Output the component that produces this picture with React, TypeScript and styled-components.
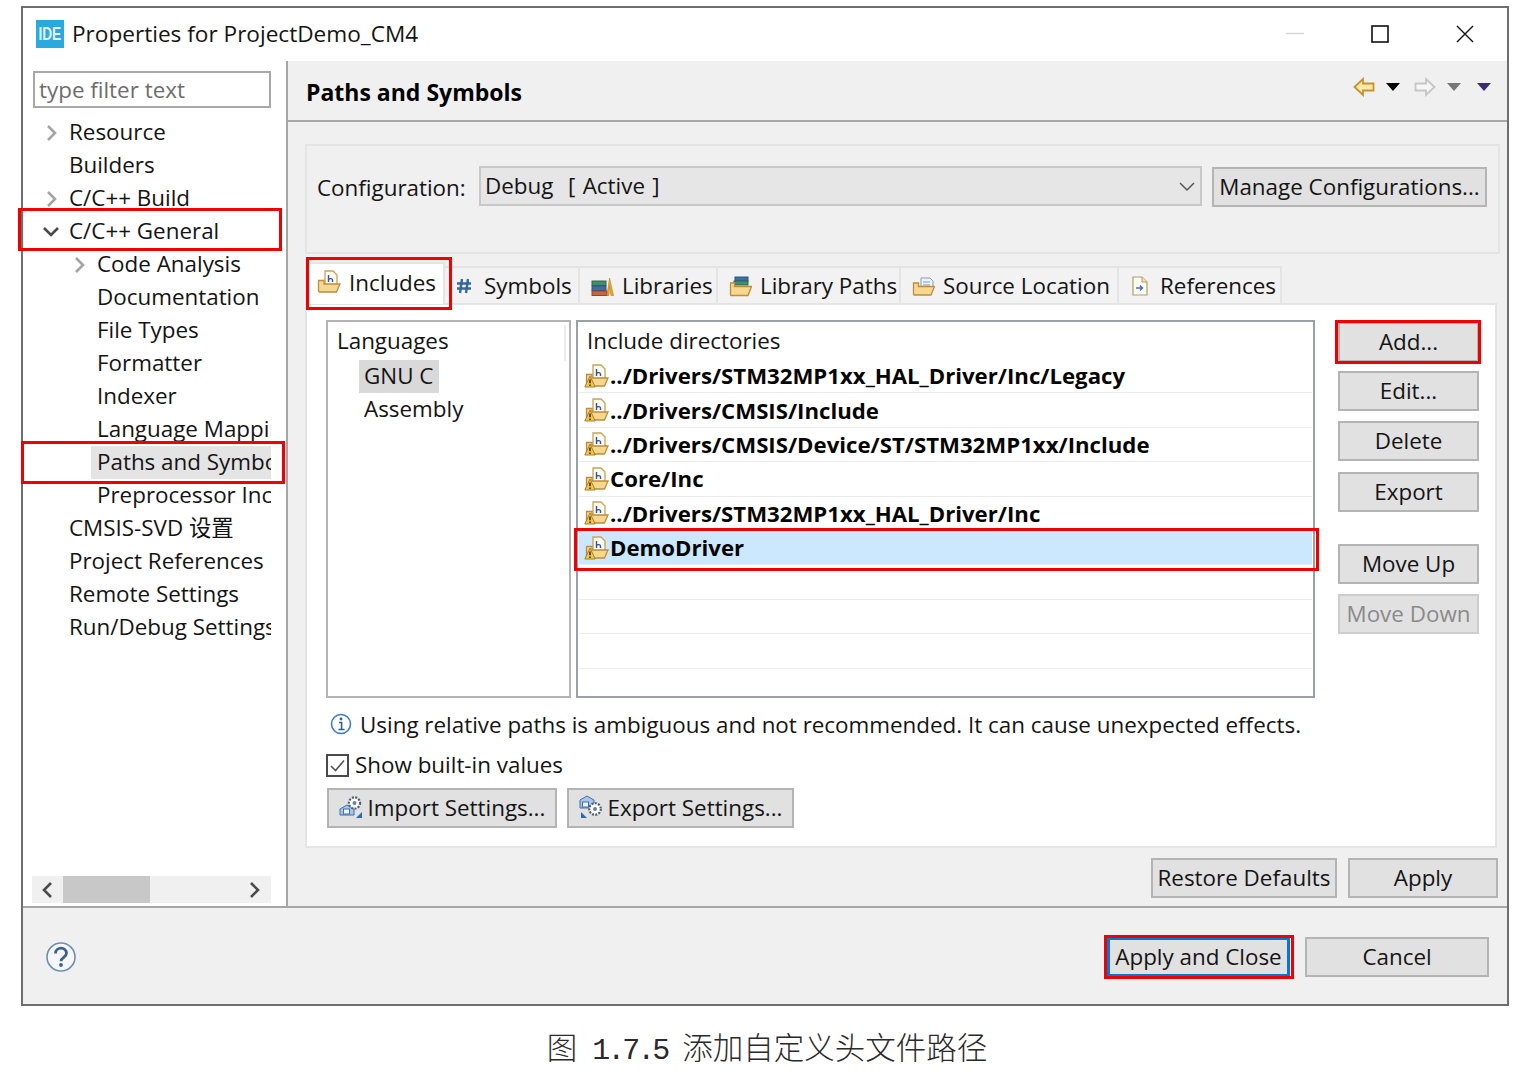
import React, { FC } from 'react';
import styled, { createGlobalStyle } from 'styled-components';

const FONT = '"Open Sans", "Noto Sans", "Noto Sans CJK SC", sans-serif';

const GlobalStyle = createGlobalStyle`
  html, body { margin: 0; padding: 0; background: #fff; }
  * { box-sizing: border-box; }
  body { font-family: ${FONT}; font-size: 22.4px; color: #141414; }
`;

const Page = styled.div`
  width: 1514px;
  height: 1088px;
  padding: 6px 0 0 21px;
  overflow: hidden;
`;
const Window = styled.div`
  width: 1488px;
  height: 1000px;
  border: 2px solid #6e6e6e;
  display: flex;
  flex-direction: column;
  background: #fff;
`;
const TitleBar = styled.div`
  height: 53px;
  display: flex;
  align-items: center;
  padding: 0 33px 2px 13px;
  gap: 8px;
  flex: none;
`;
const AppLogo = styled.div`
  width: 28px;
  height: 28px;
  background: #29a9e0;
  color: #e2f4fc;
  font: bold 19px/28px "Liberation Sans", sans-serif;
  text-align: center;
  overflow: hidden;
`;
const AppLogoText = styled.span`
  display: inline-block;
  transform: scaleX(0.72);
  transform-origin: center;
  margin-left: -6px;
  margin-right: -6px;
`;
const WindowTitle = styled.div`
  flex: 1;
  font-size: 22.6px;
  line-height: 30px;
`;
const WindowButtons = styled.div`
  display: flex;
  align-items: center;
  gap: 67px;
`;
const Body = styled.div`
  flex: 1;
  display: flex;
  min-height: 0;
`;
const Sidebar = styled.div`
  width: 265px;
  flex: none;
  border-right: 2px solid #a6a6a6;
  padding: 10px 0 3px 10px;
  display: flex;
  flex-direction: column;
`;
const FilterInput = styled.div`
  width: 238px;
  height: 37px;
  border: 2px solid #a8a8a8;
  padding-left: 4px;
  color: #6d6d6d;
  line-height: 33px;
  flex: none;
`;
const Tree = styled.div`
  width: 238px;
  margin-top: 8px;
`;
const TreeRow = styled.div<{ $level: number }>`
  position: relative;
  height: 33px;
  display: flex;
  align-items: center;
  padding-left: ${(p) => 13 + p.$level * 28}px;
  white-space: nowrap;
`;
const Twisty = styled.span`
  width: 23px;
  flex: none;
  display: flex;
  align-items: center;
`;
const TreeLabel = styled.span<{ $selected?: boolean }>`
  overflow: hidden;
  height: 33px;
  line-height: 32px;
  flex: 1;
  min-width: 0;
  background: ${(p) => (p.$selected ? '#e4e4e4' : 'transparent')};
  margin-left: ${(p) => (p.$selected ? '-6px' : '0')};
  padding-left: ${(p) => (p.$selected ? '6px' : '0')};
`;
const Highlight = styled.div<{ $top: number; $left: number; $w: number; $h: number }>`
  position: absolute;
  top: ${(p) => p.$top}px;
  left: ${(p) => p.$left}px;
  width: ${(p) => p.$w}px;
  height: ${(p) => p.$h}px;
  border: 3px solid #f00000;
  pointer-events: none;
  z-index: 5;
`;
const HScroll = styled.div`
  margin-top: auto;
  margin-left: -1px;
  width: 239px;
  height: 27px;
  background: #f0f0f0;
  display: flex;
  align-items: center;
  flex: none;
`;
const ScrollArrow = styled.span`
  width: 31px;
  display: flex;
  justify-content: center;
  flex: none;
`;
const ScrollThumb = styled.div`
  width: 87px;
  height: 27px;
  background: #c8c8c8;
  margin-right: auto;
`;
const Main = styled.div`
  flex: 1;
  display: flex;
  flex-direction: column;
  background: #f0f0f0;
  min-width: 0;
`;
const Header = styled.div`
  height: 61px;
  flex: none;
  border-bottom: 2px solid #a6a6a6;
  display: flex;
  align-items: center;
  padding: 2px 16px 0 18px;
`;
const HeaderTitle = styled.div`
  flex: 1;
  font-weight: 700;
  font-size: 23px;
  color: #000;
`;
const HeaderTools = styled.div`
  display: flex;
  align-items: center;
  margin-top: -10px;
`;
const Content = styled.div`
  flex: 1;
  padding: 22px 9px 0 17px;
  display: flex;
  flex-direction: column;
`;
const ConfigPanel = styled.div`
  width: 1195px;
  height: 110px;
  border: 2px solid #e4e4e4;
  padding: 20px 12px 0 10px;
  display: flex;
  align-items: flex-start;
  flex: none;
`;
const ConfigLabel = styled.div`
  width: 162px;
  height: 40px;
  line-height: 44px;
  flex: none;
`;
const Select = styled.div`
  width: 723px;
  height: 40px;
  background: #e6e6e6;
  border: 2px solid #c8c8c8;
  padding: 0 4px 1px;
  display: flex;
  align-items: center;
  justify-content: space-between;
  line-height: 34px;
  word-spacing: 1.5px;
  flex: none;
`;
const Button = styled.div<{ $w: number; $disabled?: boolean; $focus?: boolean; $mt?: number; $ml?: number }>`
  position: relative;
  width: ${(p) => p.$w}px;
  height: 40px;
  flex: none;
  background: #e1e1e1;
  border-style: solid;
  border-width: ${(p) => (p.$focus ? '3px' : '2px')};
  border-color: ${(p) => (p.$focus ? '#0078d7' : p.$disabled ? '#cdcdcd' : '#b4b4b4')};
  color: ${(p) => (p.$disabled ? '#8a8a8a' : '#141414')};
  display: flex;
  align-items: center;
  justify-content: center;
  gap: 5px;
  padding-bottom: 2px;
  margin-top: ${(p) => p.$mt ?? 0}px;
  margin-left: ${(p) => p.$ml ?? 0}px;
  white-space: nowrap;
`;
const TabBar = styled.div`
  display: flex;
  align-items: flex-end;
  height: 45px;
  margin-top: 4px;
  flex: none;
`;
const Tab = styled.div<{ $active?: boolean; $w: number; $pl?: number }>`
  position: relative;
  width: ${(p) => p.$w}px;
  height: ${(p) => (p.$active ? '42px' : '37px')};
  padding: ${(p) => (p.$active ? '0 0 4px 9px' : `0 0 0 ${p.$pl ?? 11}px`)};
  background: ${(p) => (p.$active ? '#fff' : '#f2f2f2')};
  border: 2px solid #e4e4e4;
  border-bottom: none;
  border-left-width: ${(p) => (p.$active ? '2px' : '0')};
  display: flex;
  align-items: center;
  gap: 8px;
  white-space: nowrap;
  flex: none;
  z-index: ${(p) => (p.$active ? 2 : 1)};
  margin-bottom: ${(p) => (p.$active ? '-1px' : '0')};
`;
const TabPanel = styled.div`
  width: 1192px;
  height: 545px;
  background: #fff;
  border: 2px solid #e4e4e4;
  padding: 15px 0 0 19px;
  display: flex;
  flex-direction: column;
  flex: none;
`;
const PanelTop = styled.div`
  display: flex;
  height: 378px;
  flex: none;
`;
const LangBox = styled.div`
  width: 245px;
  border: 2px solid #b4b4b4;
  padding-left: 9px;
  flex: none;
`;
const LangHeader = styled.div`
  height: 38px;
  line-height: 38px;
  position: relative;

  &::after {
    content: '';
    position: absolute;
    top: 3px;
    right: 3px;
    width: 2px;
    height: 36px;
    background: #ececec;
  }
`;
const LangItem = styled.div<{ $selected?: boolean }>`
  margin-left: 22px;
  width: 80px;
  height: 33px;
  line-height: 31px;
  padding-left: 5px;
  white-space: nowrap;
  background: ${(p) => (p.$selected ? '#d9d9d9' : 'transparent')};
`;
const IncludeBox = styled.div`
  width: 739px;
  margin-left: 5px;
  border: 2px solid #9a9fa8;
  padding: 0 1px;
  flex: none;
`;
const IncludeHeader = styled.div`
  height: 37px;
  line-height: 38px;
  padding-left: 8px;
`;
const IncludeRow = styled.div<{ $selected?: boolean }>`
  position: relative;
  height: 34.4px;
  display: flex;
  align-items: center;
  padding-left: 5px;
  gap: 1px;
  border-bottom: 1px solid #ececec;
  font-weight: 700;
  font-size: 22.2px;
  color: #050505;
  background: ${(p) => (p.$selected ? '#cce8ff' : 'transparent')};
  white-space: nowrap;
`;
const SideButtons = styled.div`
  margin-left: 23px;
  padding-top: 2px;
  display: flex;
  flex-direction: column;
  gap: 10px;
`;
const InfoRow = styled.div`
  height: 30px;
  margin-top: 12px;
  padding: 0 0 2px 4px;
  display: flex;
  align-items: center;
  gap: 8px;
  white-space: nowrap;
  flex: none;
`;
const CheckRow = styled.div`
  height: 30px;
  margin-top: 10px;
  display: flex;
  align-items: center;
  gap: 6px;
  flex: none;
`;
const CheckLabel = styled.span`
  margin-top: -2px;
`;
const CheckBox = styled.div`
  width: 23px;
  height: 23px;
  border: 2px solid #4a4a4a;
  display: flex;
  align-items: center;
  justify-content: center;
`;
const SettingsRow = styled.div`
  display: flex;
  gap: 10px;
  margin: 8px 0 0 1px;
  flex: none;
`;
const ApplyRow = styled.div`
  display: flex;
  justify-content: flex-end;
  gap: 11px;
  margin-top: 10px;
  flex: none;
`;
const Footer = styled.div`
  height: 98px;
  flex: none;
  border-top: 2px solid #a6a6a6;
  background: #f0f0f0;
  display: flex;
  align-items: center;
  padding: 2px 18px 0 23px;
  gap: 15px;
`;
const FooterSpacer = styled.div`
  flex: 1;
`;
const Caption = styled.div`
  width: 1488px;
  padding: 22px 0 0 4px;
  text-align: center;
  font-family: "Noto Sans CJK SC", sans-serif;
  font-weight: 300;
  font-size: 30.5px;
  line-height: 36px;
  color: #2a2a2a;
  white-space: pre;
`;
const CaptionNumber = styled.span`
  font-family: "Liberation Mono", monospace;
  font-size: 30px;
  letter-spacing: -3px;
`;
const NavSvg = styled.svg<{ $ml?: number }>`
  margin-left: ${(p) => p.$ml ?? 0}px;
  flex: none;
`;
const TwistySvg = styled.svg`
  overflow: visible;
`;

const Chevron: FC<{ dir: 'right' | 'down' | 'left'; dark?: boolean }> = ({ dir, dark }) => {
  const pts = dir === 'right' ? '2,1 9,8 2,15' : dir === 'left' ? '10,1 3,8 10,15' : '-2,4 5,11 12,4';
  return (
    <TwistySvg width="14" height="16" viewBox="0 0 14 16">
      <polyline points={pts} fill="none" stroke={dark ? '#4a4a4a' : '#a4a4a4'} strokeWidth="2.6" />
    </TwistySvg>
  );
};

const IncludeIcon: FC<{ warn?: boolean }> = ({ warn }) => (
  <svg width="25" height="24" viewBox="0 0 25 24">
    <path d="M9 1h8l4 4v12H9z" fill="#fdfaf0" stroke="#c9a25a" strokeWidth="1.3" />
    <path d="M12.5 5v7M12.5 9.5c1.5-1.5 4-1 4 .5v2" fill="none" stroke="#33589a" strokeWidth="1.4" />
    <path d="M2.5 21V10.5H8V14h16l-3.5 8H3.5z" fill="#f7d78e" stroke="#bc8d3f" strokeWidth="1.3" />
    {warn && (
      <>
        <path d="M6 12L.8 23h10.4z" fill="#f3c64a" stroke="#a8812c" strokeWidth="1" />
        <path d="M6 15.5v3.8M6 20.5v1.4" stroke="#3a2c10" strokeWidth="1.5" />
      </>
    )}
  </svg>
);

const HashIcon: FC = () => (
  <svg width="16" height="16" viewBox="0 0 16 16" style={{ marginRight: 4 }}>
    <path d="M6 1L4 15M12 1l-2 14M1 5.5h14M1 10.5h14" fill="none" stroke="#33689f" strokeWidth="2.4" />
  </svg>
);

const LibrariesIcon: FC = () => (
  <svg width="23" height="22" viewBox="0 0 23 22">
    <rect x="1" y="6" width="14" height="4.5" fill="#3f8f6a" stroke="#2c6a4e" />
    <rect x="1" y="11" width="14" height="4.5" fill="#3e6ea8" stroke="#2d5482" />
    <rect x="1" y="16" width="15" height="4.5" fill="#c4683c" stroke="#94492a" />
    <path d="M16 20.5L18.5 3l4 17.5h-2.6L18.5 11 18 20.5z" fill="#eda92c" stroke="#b97f1a" strokeWidth=".6" />
  </svg>
);

const LibraryPathIcon: FC = () => (
  <svg width="23" height="22" viewBox="0 0 23 22">
    <rect x="6" y="2" width="13" height="4" fill="#3e6ea8" stroke="#2d5482" />
    <rect x="5" y="6" width="14" height="4" fill="#3f8f6a" stroke="#2c6a4e" />
    <path d="M1.5 20V8h4v3.5h17L19 20.5H2z" fill="#f7d78e" stroke="#bc8d3f" strokeWidth="1.3" />
  </svg>
);

const SourceIcon: FC = () => (
  <svg width="23" height="22" viewBox="0 0 23 22">
    <path d="M9 3h9l3 3v8H9z" fill="#eef3fa" stroke="#7f9cc4" />
    <path d="M11 7h7M11 10h7" stroke="#7f9cc4" />
    <path d="M1.5 19V8h5v3.5h16L19 20H2z" fill="#f7d78e" stroke="#bc8d3f" strokeWidth="1.3" />
  </svg>
);

const ReferenceIcon: FC = () => (
  <svg width="21" height="22" viewBox="0 0 21 22">
    <path d="M2 2h9l5 5v13H2z" fill="#fbfbf6" stroke="#b79b62" strokeWidth="1.2" />
    <path d="M11 2v5h5" fill="#f2e5c2" stroke="#b79b62" />
    <path d="M5 13h6M9 10.5l2.5 2.5L9 15.5" fill="none" stroke="#4a6ea5" strokeWidth="1.4" />
  </svg>
);

const ImportIcon: FC = () => (
  <svg width="24" height="24" viewBox="0 0 24 24">
    <path d="M1 20v-6l7-4 7 4v6z" fill="#a9c6e8" stroke="#3e6fab" />
    <rect x="4.5" y="14" width="6" height="5" fill="#eef4fb" stroke="#3e6fab" />
    <circle cx="15.5" cy="8" r="5.6" fill="#fff" stroke="#4e5f75" strokeWidth="2.2" strokeDasharray="2 1.3" />
    <circle cx="15.5" cy="8" r="2" fill="#6e8198" />
    <path d="M23 17v6h-6z" fill="#2f68b0" />
  </svg>
);

const ExportIcon: FC = () => (
  <svg width="24" height="24" viewBox="0 0 24 24">
    <path d="M1 13V5l7-4 7 4v8z" fill="#a9c6e8" stroke="#3e6fab" />
    <rect x="3.5" y="7" width="6" height="5" fill="#eef4fb" stroke="#3e6fab" />
    <circle cx="16" cy="14" r="5.8" fill="#fff" stroke="#4e5f75" strokeWidth="2.2" strokeDasharray="2 1.3" />
    <circle cx="16" cy="14" r="2" fill="#6e8198" />
    <path d="M2 17v6h6z" fill="#2f68b0" />
  </svg>
);

const NavArrow: FC<{ dir: 'left' | 'right'; ml?: number }> = ({ dir, ml }) => (
  <NavSvg $ml={ml} width="22" height="20" viewBox="0 0 22 20">
    {dir === 'left' ? (
      <path d="M1.5 10L10 2v4.5h10.5v7H10V18z" fill="#fde9a8" stroke="#c8922c" strokeWidth="1.8" />
    ) : (
      <path d="M20.5 10L12 2v4.5H1.5v7H12V18z" fill="#f6f6f6" stroke="#c6c6c6" strokeWidth="1.8" />
    )}
  </NavSvg>
);

const Caret = styled.span<{ $color: string; $ml: number }>`
  width: 0;
  height: 0;
  border-left: 7px solid transparent;
  border-right: 7px solid transparent;
  border-top: 8px solid ${(p) => p.$color};
  margin-left: ${(p) => p.$ml}px;
`;

const TREE: { label: string; level: number; twisty?: 'right' | 'down'; selected?: boolean; mark?: 'general' | 'paths' }[] = [
  { label: 'Resource', level: 0, twisty: 'right' },
  { label: 'Builders', level: 0 },
  { label: 'C/C++ Build', level: 0, twisty: 'right' },
  { label: 'C/C++ General', level: 0, twisty: 'down', mark: 'general' },
  { label: 'Code Analysis', level: 1, twisty: 'right' },
  { label: 'Documentation', level: 1 },
  { label: 'File Types', level: 1 },
  { label: 'Formatter', level: 1 },
  { label: 'Indexer', level: 1 },
  { label: 'Language Mappings', level: 1 },
  { label: 'Paths and Symbols', level: 1, selected: true, mark: 'paths' },
  { label: 'Preprocessor Include', level: 1 },
  { label: 'CMSIS-SVD 设置', level: 0 },
  { label: 'Project References', level: 0 },
  { label: 'Remote Settings', level: 0 },
  { label: 'Run/Debug Settings', level: 0 },
];

const INCLUDES = [
  '../Drivers/STM32MP1xx_HAL_Driver/Inc/Legacy',
  '../Drivers/CMSIS/Include',
  '../Drivers/CMSIS/Device/ST/STM32MP1xx/Include',
  'Core/Inc',
  '../Drivers/STM32MP1xx_HAL_Driver/Inc',
  'DemoDriver',
];

const App: FC = () => (
  <Page>
    <GlobalStyle />
    <Window>
      <TitleBar>
        <AppLogo>
          <AppLogoText>IDE</AppLogoText>
        </AppLogo>
        <WindowTitle>Properties for ProjectDemo_CM4</WindowTitle>
        <WindowButtons>
          <svg width="18" height="18" viewBox="0 0 18 18">
            <path d="M0 8.5h18" stroke="#d4d4d4" strokeWidth="1.4" />
          </svg>
          <svg width="18" height="18" viewBox="0 0 18 18">
            <rect x="1" y="1" width="16" height="16" fill="none" stroke="#111" strokeWidth="1.6" />
          </svg>
          <svg width="18" height="18" viewBox="0 0 18 18">
            <path d="M1 1l16 16M17 1L1 17" stroke="#111" strokeWidth="1.4" />
          </svg>
        </WindowButtons>
      </TitleBar>
      <Body>
        <Sidebar>
          <FilterInput>type filter text</FilterInput>
          <Tree>
            {TREE.map((row) => (
              <TreeRow key={row.label} $level={row.level}>
                <Twisty>{row.twisty && <Chevron dir={row.twisty} dark={row.twisty === 'down'} />}</Twisty>
                <TreeLabel $selected={row.selected}>{row.label}</TreeLabel>
                {row.mark === 'general' && <Highlight $top={-7} $left={-15} $w={264} $h={43} />}
                {row.mark === 'paths' && <Highlight $top={-5} $left={-12} $w={264} $h={43} />}
              </TreeRow>
            ))}
          </Tree>
          <HScroll>
            <ScrollArrow>
              <Chevron dir="left" dark />
            </ScrollArrow>
            <ScrollThumb />
            <ScrollArrow>
              <Chevron dir="right" dark />
            </ScrollArrow>
          </HScroll>
        </Sidebar>
        <Main>
          <Header>
            <HeaderTitle>Paths and Symbols</HeaderTitle>
            <HeaderTools>
              <NavArrow dir="left" />
              <Caret $color="#000" $ml={11} />
              <NavArrow dir="right" ml={14} />
              <Caret $color="#777" $ml={11} />
              <Caret $color="#3c2a78" $ml={16} />
            </HeaderTools>
          </Header>
          <Content>
            <ConfigPanel>
              <ConfigLabel>Configuration:</ConfigLabel>
              <Select>
                <span>Debug&nbsp; [ Active ]</span>
                <svg width="16" height="16" viewBox="0 0 16 16" style={{ marginRight: 1 }}>
                  <polyline points="1,5 8,12 15,5" fill="none" stroke="#555" strokeWidth="1.5" />
                </svg>
              </Select>
              <Button $w={275} $mt={1} $ml={10}>
                Manage Configurations...
              </Button>
            </ConfigPanel>
            <TabBar>
              <Tab $active $w={140}>
                <IncludeIcon />
                Includes
                <Highlight $top={-7} $left={-1} $w={146} $h={53} />
              </Tab>
              <Tab $w={135}>
                <HashIcon />
                Symbols
              </Tab>
              <Tab $w={138}>
                <LibrariesIcon />
                Libraries
              </Tab>
              <Tab $w={183}>
                <LibraryPathIcon />
                Library Paths
              </Tab>
              <Tab $w={218}>
                <SourceIcon />
                Source Location
              </Tab>
              <Tab $w={163} $pl={12}>
                <ReferenceIcon />
                References
              </Tab>
            </TabBar>
            <TabPanel>
              <PanelTop>
                <LangBox>
                  <LangHeader>Languages</LangHeader>
                  <LangItem $selected>GNU C</LangItem>
                  <LangItem>Assembly</LangItem>
                </LangBox>
                <IncludeBox>
                  <IncludeHeader>Include directories</IncludeHeader>
                  {INCLUDES.map((path) => (
                    <IncludeRow key={path} $selected={path === 'DemoDriver'}>
                      <IncludeIcon warn />
                      {path}
                      {path === 'DemoDriver' && <Highlight $top={-3} $left={-5} $w={745} $h={43} />}
                    </IncludeRow>
                  ))}
                  <IncludeRow />
                  <IncludeRow />
                  <IncludeRow />
                </IncludeBox>
                <SideButtons>
                  <Button $w={141}>
                    Add...
                    <Highlight $top={-4} $left={-5} $w={146} $h={44} />
                  </Button>
                  <Button $w={141} $mt={-1}>
                    Edit...
                  </Button>
                  <Button $w={141}>Delete</Button>
                  <Button $w={141} $mt={1}>
                    Export
                  </Button>
                  <Button $w={141} $mt={22}>
                    Move Up
                  </Button>
                  <Button $w={141} $disabled>
                    Move Down
                  </Button>
                </SideButtons>
              </PanelTop>
              <InfoRow>
                <svg width="22" height="22" viewBox="0 0 22 22">
                  <circle cx="11" cy="11" r="9.5" fill="#fff" stroke="#3d7fc0" strokeWidth="1.6" />
                  <path d="M9 9.5h2.6V16M8.5 16.5h6" fill="none" stroke="#2c5f9e" strokeWidth="1.6" />
                  <circle cx="11" cy="6" r="1.4" fill="#2c5f9e" />
                </svg>
                Using relative paths is ambiguous and not recommended. It can cause unexpected effects.
              </InfoRow>
              <CheckRow>
                <CheckBox>
                  <svg width="17" height="17" viewBox="0 0 17 17">
                    <polyline points="2,9 6.5,13.5 15,3.5" fill="none" stroke="#555" strokeWidth="1.6" />
                  </svg>
                </CheckBox>
                <CheckLabel>Show built-in values</CheckLabel>
              </CheckRow>
              <SettingsRow>
                <Button $w={230}>
                  <ImportIcon />
                  Import Settings...
                </Button>
                <Button $w={227}>
                  <ExportIcon />
                  Export Settings...
                </Button>
              </SettingsRow>
            </TabPanel>
            <ApplyRow>
              <Button $w={186}>Restore Defaults</Button>
              <Button $w={150}>Apply</Button>
            </ApplyRow>
          </Content>
        </Main>
      </Body>
      <Footer>
        <svg width="30" height="30" viewBox="0 0 30 30">
          <circle cx="15" cy="15" r="14" fill="#f4f6f9" stroke="#6f8eb4" strokeWidth="1.6" />
          <path d="M9.5 11.5c0-7 11-7 11 -.2 0 4-5.5 4-5.5 8" fill="none" stroke="#40608c" strokeWidth="2.8" />
          <circle cx="15" cy="23" r="1.9" fill="#40608c" />
        </svg>
        <FooterSpacer />
        <Button $w={183} $focus>
          Apply and Close
          <Highlight $top={-5} $left={-6} $w={190} $h={44} />
        </Button>
        <Button $w={184}>Cancel</Button>
      </Footer>
    </Window>
    <Caption>
      图<CaptionNumber> 1.7.5 </CaptionNumber>添加自定义头文件路径
    </Caption>
  </Page>
);

export default App;
